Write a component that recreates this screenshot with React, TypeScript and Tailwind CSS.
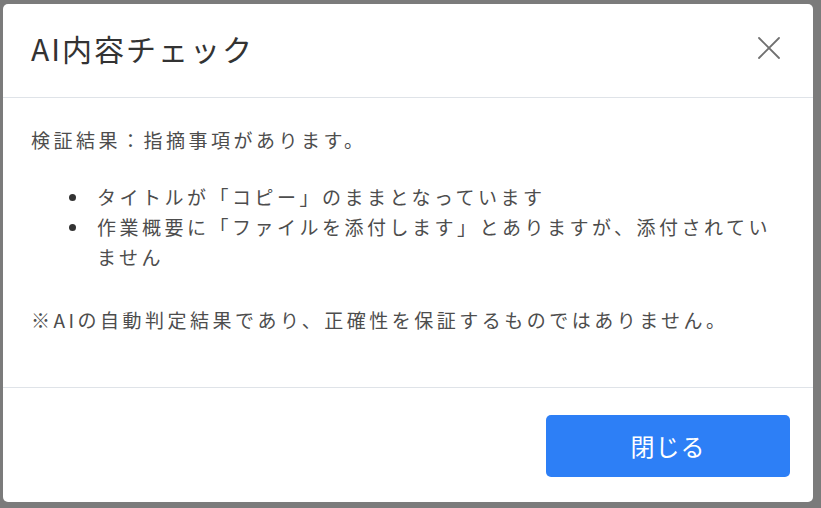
const font = { fontFamily: '"Noto Sans CJK JP", "Noto Sans", sans-serif' };

const issues = [
  "タイトルが「コピー」のままとなっています",
  "作業概要に「ファイルを添付します」とありますが、添付されていません",
];

function CloseIcon() {
  return (
    <svg width="24" height="24" viewBox="0 0 24 24" fill="none" stroke="#707070" strokeWidth="1.8" strokeLinecap="round">
      <path d="M2 2L22 22M22 2L2 22" />
    </svg>
  );
}

export default function App() {
  return (
    <div className="h-[508px] w-[821px] overflow-hidden bg-[#7b7b7b] pl-[3px] pt-[4px]" style={font}>
      <div className="flex h-[498px] w-[810px] flex-col rounded-[5px] bg-white">
        <header className="flex h-[94px] shrink-0 items-center justify-between border-b border-[#dfe3e8] pb-[6px] pl-[28px] pr-[32px]">
          <h2 className="text-[30px] leading-none tracking-[2px] text-[#333]">AI内容チェック</h2>
          <button className="flex h-[24px] w-[24px] items-center justify-center">
            <CloseIcon />
          </button>
        </header>

        <div className="flex-1 px-[28px] pt-[27px] text-[19px] leading-[30px] tracking-[3.5px] text-[#4d4d4d]">
          <p>検証結果：指摘事項があります。</p>
          <ul className="mt-[27px]">
            {issues.map((t) => (
              <li key={t} className="flex">
                <span className="flex h-[30px] w-[66px] shrink-0 items-center pl-[38px]">
                  <span className="h-[7px] w-[7px] rounded-full bg-[#333]" />
                </span>
                <span className="min-w-0 flex-1">{t}</span>
              </li>
            ))}
          </ul>
          <p className="mt-[33px]">※AIの自動判定結果であり、正確性を保証するものではありません。</p>
        </div>

        <footer className="flex h-[115px] shrink-0 justify-end border-t border-[#dfe3e8] pr-[23px] pt-[27px]">
          <button className="h-[62px] w-[244px] rounded-[5px] bg-[#2d7ff6] text-[24px] tracking-[1px] text-white">
            閉じる
          </button>
        </footer>
      </div>
    </div>
  );
}
